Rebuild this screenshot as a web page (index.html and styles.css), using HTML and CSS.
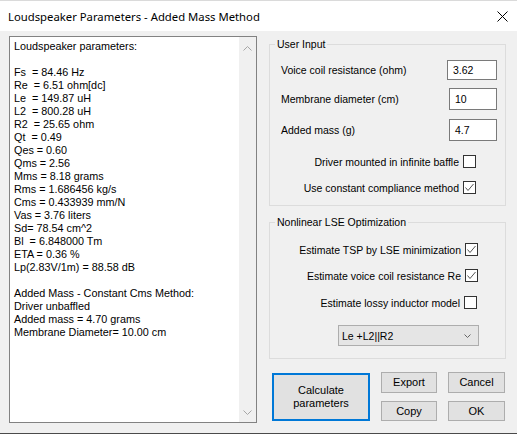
FILE: index.html
```html
<!DOCTYPE html>
<html lang="en">
<head>
    <meta charset="UTF-8">
    <meta name="viewport" content="width=device-width, initial-scale=1.0">
    <title>Loudspeaker Parameters - Added Mass Method</title>
    <link rel="stylesheet" href="styles.css">
</head>
<body>
    <div class="window">
        <div class="titlebar">
            <span class="title">Loudspeaker Parameters - Added Mass Method</span>
            <span class="close">
                <svg width="11" height="11" viewBox="0 0 11 11">
                    <path d="M0.5 0.5 L10.5 10.5 M10.5 0.5 L0.5 10.5" stroke="#000" stroke-width="1" fill="none"/>
                </svg>
            </span>
        </div>

        <div class="dialog">
            <div class="report">
<pre class="report-text">Loudspeaker parameters:

Fs  = 84.46 Hz
Re  = 6.51 ohm[dc]
Le  = 149.87 uH
L2  = 800.28 uH
R2  = 25.65 ohm
Qt  = 0.49
Qes = 0.60
Qms = 2.56
Mms = 8.18 grams
Rms = 1.686456 kg/s
Cms = 0.433939 mm/N
Vas = 3.76 liters
Sd= 78.54 cm^2
Bl  = 6.848000 Tm
ETA = 0.36 %
Lp(2.83V/1m) = 88.58 dB

Added Mass - Constant Cms Method:
Driver unbaffled
Added mass = 4.70 grams
Membrane Diameter= 10.00 cm</pre>
                <div class="scrollbar">
                    <svg width="9" height="5" viewBox="0 0 9 5">
                        <path d="M0.5 4.5 L4.5 0.5 L8.5 4.5" stroke="#a6a6a6" fill="none"/>
                    </svg>
                    <svg width="9" height="5" viewBox="0 0 9 5">
                        <path d="M0.5 0.5 L4.5 4.5 L8.5 0.5" stroke="#a6a6a6" fill="none"/>
                    </svg>
                </div>
            </div>

            <div class="side">
                <fieldset class="group group-input">
                    <legend>User Input</legend>
                    <div class="field field-first">
                        <span>Voice coil resistance (ohm)</span>
                        <span class="edit edit-wide">3.62</span>
                    </div>
                    <div class="field field-second">
                        <span>Membrane diameter (cm)</span>
                        <span class="edit">10</span>
                    </div>
                    <div class="field field-third">
                        <span>Added mass (g)</span>
                        <span class="edit">4.7</span>
                    </div>
                    <div class="check-row check-a">
                        <span>Driver mounted in infinite baffle</span>
                        <span class="box"></span>
                    </div>
                    <div class="check-row check-b">
                        <span>Use constant compliance method</span>
                        <span class="box checked">
                            <svg width="11" height="11" viewBox="0 0 11 11">
                                <path d="M1.5 5.5 L4 8.5 L9.5 2" stroke="#555" fill="none"/>
                            </svg>
                        </span>
                    </div>
                </fieldset>

                <fieldset class="group group-lse">
                    <legend>Nonlinear LSE Optimization</legend>
                    <div class="check-row check-c">
                        <span>Estimate TSP by LSE minimization</span>
                        <span class="box checked">
                            <svg width="11" height="11" viewBox="0 0 11 11">
                                <path d="M1.5 5.5 L4 8.5 L9.5 2" stroke="#555" fill="none"/>
                            </svg>
                        </span>
                    </div>
                    <div class="check-row check-c">
                        <span>Estimate voice coil resistance Re</span>
                        <span class="box checked">
                            <svg width="11" height="11" viewBox="0 0 11 11">
                                <path d="M1.5 5.5 L4 8.5 L9.5 2" stroke="#555" fill="none"/>
                            </svg>
                        </span>
                    </div>
                    <div class="check-row check-d">
                        <span>Estimate lossy inductor model</span>
                        <span class="box"></span>
                    </div>
                    <div class="combo">
                        <span>Le +L2||R2</span>
                        <svg width="7" height="4" viewBox="0 0 7 4">
                            <path d="M0.5 0.5 L3.5 3.5 L6.5 0.5" stroke="#666" fill="none"/>
                        </svg>
                    </div>
                </fieldset>

                <div class="buttons">
                    <button class="btn btn-default">Calculate<br>parameters</button>
                    <div class="btn-grid">
                        <button class="btn">Export</button>
                        <button class="btn">Cancel</button>
                        <button class="btn">Copy</button>
                        <button class="btn">OK</button>
                    </div>
                </div>
            </div>
        </div>

        <div class="screen-edge"></div>
    </div>
</body>
</html>
```

FILE: styles.css
```css
* {
    box-sizing: border-box;
    margin: 0;
    padding: 0;
}

body {
    font-family: 'Liberation Sans', Arial, sans-serif;
    font-size: 10.5px;
    color: #000;
    background-color: #f0f0f0;
    width: 517px;
    height: 436px;
    overflow: hidden;
}

.window {
    display: flex;
    flex-direction: column;
    height: 436px;
}

.titlebar {
    height: 31px;
    background-color: #fff;
    border-top: 1px solid #dadada;
    display: flex;
    align-items: center;
    justify-content: space-between;
    padding: 0 9px 0 8px;
}

.title {
    font-family: 'Noto Sans', sans-serif;
    font-size: 11.3px;
}

.close {
    display: flex;
    margin-top: 1px;
}

.dialog {
    height: 402px;
    display: flex;
    gap: 12px;
    padding: 5px 0 0 9px;
}

/* results box */
.report {
    width: 248px;
    height: 387px;
    border: 1px solid #828282;
    background-color: #fff;
    display: flex;
    justify-content: space-between;
}

.report-text {
    font-family: 'Liberation Sans', Arial, sans-serif;
    font-size: 10.8px;
    line-height: 13px;
    padding: 3px 0 0 4px;
}

.scrollbar {
    width: 17px;
    background-color: #f0f0f0;
    display: flex;
    flex-direction: column;
    justify-content: space-between;
    align-items: center;
    padding: 9px 0 7px;
}

/* right column */
.side {
    width: 237px;
    display: flex;
    flex-direction: column;
}

.group {
    border: 1px solid #dcdcdc;
    padding: 0;
}

.group legend {
    margin-left: 5px;
    padding: 0 2px;
    line-height: 16px;
}

.group-lse {
    margin-top: 8px;
}

.field {
    display: flex;
    align-items: center;
    justify-content: space-between;
    padding: 0 8px 0 11px;
}

.field-first {
    height: 20px;
    margin-top: 8px;
}

.field-second {
    height: 22px;
    margin-top: 8px;
}

.field-third {
    height: 22px;
    margin-top: 9px;
}

.edit {
    width: 48px;
    height: 100%;
    border: 1px solid #7a7a7a;
    background-color: #fff;
    display: flex;
    align-items: center;
    padding-left: 5px;
}

.edit-wide {
    width: 50px;
}

.check-row {
    display: flex;
    justify-content: flex-end;
    align-items: center;
    gap: 4px;
    height: 13px;
}

.check-a {
    margin-top: 14px;
    padding-right: 29px;
}

.check-b {
    margin-top: 13px;
    margin-bottom: 11px;
    padding-right: 29px;
}

.check-c {
    margin-top: 13px;
    padding-right: 27px;
}

.check-d {
    margin-top: 14px;
    padding-right: 28px;
}

.box {
    width: 13px;
    height: 13px;
    border: 1px solid #333;
    background-color: #fff;
    display: flex;
}

.combo {
    width: 141px;
    height: 21px;
    margin: 16px 0 12px 68px;
    border: 1px solid #adadad;
    background-color: #e5e5e5;
    display: flex;
    align-items: center;
    justify-content: space-between;
    padding: 0 7px 0 3px;
}

.buttons {
    display: flex;
    gap: 11px;
    margin-top: 13px;
    padding-left: 3px;
}

.btn {
    font-family: 'Liberation Sans', Arial, sans-serif;
    font-size: 11px;
    line-height: 13px;
    color: #000;
    background-color: #e1e1e1;
    border: 1px solid #adadad;
}

.btn-default {
    width: 98px;
    height: 48px;
    margin-top: 1px;
    border: 2px solid #0078d7;
}

.btn-grid {
    display: grid;
    grid-template-columns: 56px 57px;
    grid-template-rows: 21px 20px;
    column-gap: 11px;
    row-gap: 8px;
}

.screen-edge {
    flex: 1;
    border-top: 1px solid #4a4a4a;
    background-color: #fff;
}
```
